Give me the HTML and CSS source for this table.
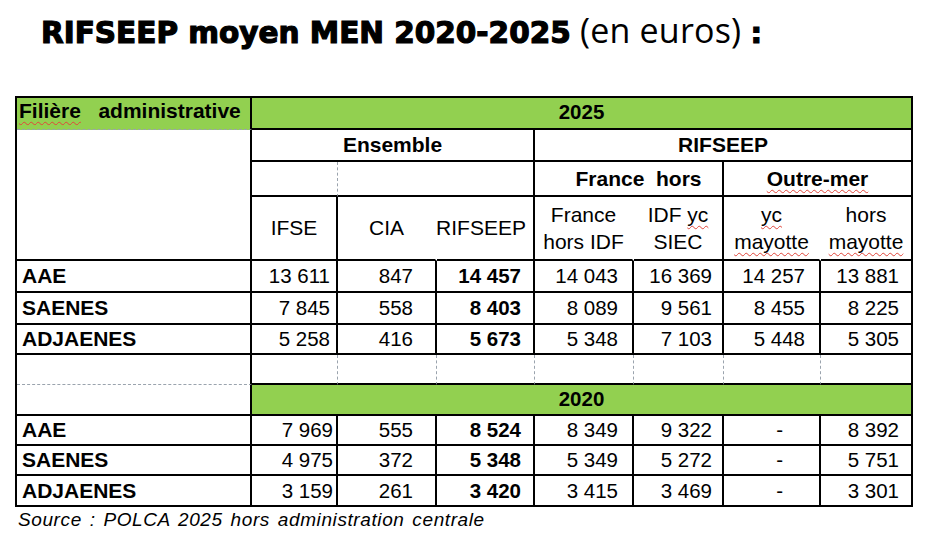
FILE: index.html
```html
<!DOCTYPE html>
<html lang="fr">
<head>
<meta charset="utf-8">
<title>RIFSEEP moyen MEN 2020-2025</title>
<link rel="stylesheet" href="styles.css">
</head>
<body>
<div class="page">
  <h1 class="title"><span class="t-bold">RIFSEEP moyen MEN 2020-2025</span> <span class="t-light">(en euros)</span> <span class="t-colon">:</span></h1>

  <div class="grid">
    <!-- header row 1 -->
    <div class="c green b fil db"><span><span class="sp">Filière</span>   administrative</span></div>
    <div class="c green b ctr span7 yr">2025</div>

    <!-- header row 2 -->
    <div class="c left-blank"></div>
    <div class="c b ctr span3">Ensemble</div>
    <div class="c b ctr span4">RIFSEEP</div>

    <!-- header row 3 -->
    <div class="c dr"></div>
    <div class="c span2"></div>
    <div class="c b ctr span2 fh">France  hors</div>
    <div class="c b ctr span2"><span class="sp">Outre-mer</span></div>

    <!-- header row 4 -->
    <div class="c ctr">IFSE</div>
    <div class="c ctr nr">CIA</div>
    <div class="c ctr rif">RIFSEEP</div>
    <div class="c ctr two nr"><span class="ml">France<br>hors IDF</span></div>
    <div class="c ctr two"><span class="ml">IDF <span class="sp">yc</span><br>SIEC</span></div>
    <div class="c ctr two nr"><span class="ml"><span class="sp">yc</span><br><span class="sp">mayotte</span></span></div>
    <div class="c ctr two"><span class="ml">hors<br><span class="sp">mayotte</span></span></div>

    <!-- 2025 data -->
    <div class="row">
      <div class="c lab">AAE</div>
      <div class="c num">13 611</div>
      <div class="c num">847</div>
      <div class="c num b">14 457</div>
      <div class="c num">14 043</div>
      <div class="c num">16 369</div>
      <div class="c num">14 257</div>
      <div class="c num">13 881</div>
    </div>
    <div class="row">
      <div class="c lab">SAENES</div>
      <div class="c num">7 845</div>
      <div class="c num">558</div>
      <div class="c num b">8 403</div>
      <div class="c num">8 089</div>
      <div class="c num">9 561</div>
      <div class="c num">8 455</div>
      <div class="c num">8 225</div>
    </div>
    <div class="row">
      <div class="c lab">ADJAENES</div>
      <div class="c num">5 258</div>
      <div class="c num">416</div>
      <div class="c num b">5 673</div>
      <div class="c num">5 348</div>
      <div class="c num">7 103</div>
      <div class="c num">5 448</div>
      <div class="c num">5 305</div>
    </div>

    <!-- blank separator row -->
    <div class="row blank">
      <div class="c db"></div>
      <div class="c dr"></div>
      <div class="c dr"></div>
      <div class="c dr"></div>
      <div class="c dr"></div>
      <div class="c dr"></div>
      <div class="c dr"></div>
      <div class="c"></div>
    </div>

    <!-- 2020 header -->
    <div class="c"></div>
    <div class="c green b ctr span7 yr">2020</div>

    <!-- 2020 data -->
    <div class="row y2020">
      <div class="c lab">AAE</div>
      <div class="c num">7 969</div>
      <div class="c num">555</div>
      <div class="c num b">8 524</div>
      <div class="c num">8 349</div>
      <div class="c num">9 322</div>
      <div class="c num dash">-</div>
      <div class="c num">8 392</div>
    </div>
    <div class="row y2020">
      <div class="c lab">SAENES</div>
      <div class="c num">4 975</div>
      <div class="c num">372</div>
      <div class="c num b">5 348</div>
      <div class="c num">5 349</div>
      <div class="c num">5 272</div>
      <div class="c num dash">-</div>
      <div class="c num">5 751</div>
    </div>
    <div class="row y2020">
      <div class="c lab">ADJAENES</div>
      <div class="c num">3 159</div>
      <div class="c num">261</div>
      <div class="c num b">3 420</div>
      <div class="c num">3 415</div>
      <div class="c num">3 469</div>
      <div class="c num dash">-</div>
      <div class="c num">3 301</div>
    </div>
  </div>

  <p class="source">Source : POLCA 2025 hors administration centrale</p>
</div>
</body>
</html>
```

FILE: styles.css
```css
html, body {
  margin: 0;
  padding: 0;
  background: #ffffff;
  color: #000000;
}

.page {
  width: 939px;
  height: 547px;
  overflow: hidden;
  font-family: "Liberation Sans", Arial, sans-serif;
}

/* ---------- title ---------- */
.title {
  box-sizing: border-box;
  height: 96px;
  margin: 0;
  padding: 10px 0 0 41px;
  font-size: 29px;
  font-weight: normal;
  line-height: 40px;
  white-space: nowrap;
  font-family: "DejaVu Sans", sans-serif;
}

.t-bold {
  font-family: "DejaVu Sans", sans-serif;
  font-weight: bold;
  font-size: 29.5px;
  -webkit-text-stroke: 1.2px #000;
}

.t-light {
  font-family: "Open Sans", sans-serif;
  font-weight: 400;
  font-size: 34px;
  letter-spacing: 0.2px;
}

.t-colon {
  font-family: "DejaVu Sans", sans-serif;
  font-weight: bold;
  font-size: 29px;
  -webkit-text-stroke: 1.2px #000;
}

/* ---------- table grid ---------- */
.grid {
  display: grid;
  box-sizing: border-box;
  width: 898px;
  margin-left: 15px;
  border-top: 2px solid #000;
  border-left: 2px solid #000;
  grid-template-columns: 235px 86px 99px 98px 99px 90px 97px 92px;
  grid-template-rows: 32px 32px 35px 64px 32px 32px 30px 30px 31px 30px 30px 31px;
  font-size: 21px;
}

.row {
  display: contents;
}

.c {
  box-sizing: border-box;
  display: flex;
  align-items: center;
  border-right: 2px solid #000;
  border-bottom: 2px solid #000;
  white-space: pre;
  overflow: hidden;
  min-width: 0;
}

.green {
  background: #92d050;
}

.b {
  font-weight: bold;
}

.ctr {
  justify-content: center;
  text-align: center;
}

.span2 { grid-column: span 2; }
.span3 { grid-column: span 3; }
.span4 { grid-column: span 4; }
.span7 { grid-column: span 7; }

.left-blank {
  grid-row: span 3;
}

.nr {
  border-right-color: transparent;
}

.dr {
  border-right: 1px dashed #9aa3ad;
}

.db {
  border-bottom: 1px dashed #9aa3ad;
}

.fil {
  padding: 0 0 6px 2px;
}

.yr {
  font-size: 20.5px;
  padding-bottom: 2px;
}

.fh {
  padding-left: 20px;
}

.rif {
  padding-right: 8px;
}

.two {
  line-height: 27px;
}

.ml {
  display: block;
  text-align: center;
  white-space: nowrap;
}

.sp {
  text-decoration: underline wavy #e0453a;
  text-decoration-thickness: 1px;
  text-underline-offset: 3px;
  text-decoration-skip-ink: none;
}

/* ---------- data ---------- */
.lab {
  font-weight: bold;
  padding-left: 5px;
}

.num {
  justify-content: flex-end;
  font-size: 20.5px;
}

.row > .num:nth-child(2) { padding-right: 6px; }
.row > .num:nth-child(3) { padding-right: 22px; }
.row > .num:nth-child(4) { padding-right: 12px; }
.row > .num:nth-child(5) { padding-right: 14px; }
.row > .num:nth-child(6) { padding-right: 10px; }
.row > .num:nth-child(7) { padding-right: 14px; }
.row > .num:nth-child(8) { padding-right: 12px; }

.y2020 > .num:nth-child(2) { padding-right: 3px; }
.y2020 > .num.dash { padding-right: 36px; }

/* ---------- source ---------- */
.source {
  margin: 2px 0 0 18px;
  font-family: "Liberation Sans", Arial, sans-serif;
  font-style: italic;
  font-size: 19px;
  line-height: 22px;
  letter-spacing: 0.6px;
  word-spacing: 2px;
  white-space: nowrap;
}
```
